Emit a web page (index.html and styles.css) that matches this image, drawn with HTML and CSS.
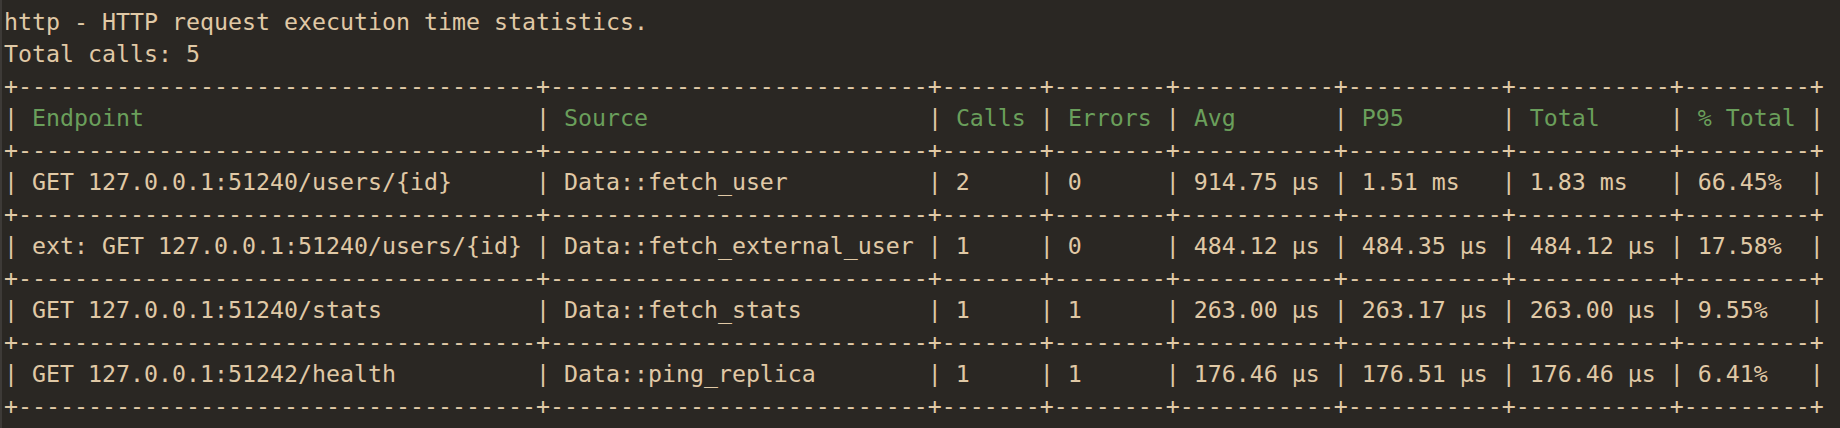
FILE: index.html
```html
<!DOCTYPE html>
<html lang="en">
<head>
  <meta charset="UTF-8">
  <meta name="viewport" content="width=device-width, initial-scale=1.0">
  <title>http - HTTP request execution time statistics</title>
  <link rel="stylesheet" href="styles.css">
</head>
<body>
  <div class="terminal">
<pre class="output">http - HTTP request execution time statistics.
Total calls: 5
+-------------------------------------+---------------------------+-------+--------+-----------+-----------+-----------+---------+
| <span class="hd">Endpoint</span>                            | <span class="hd">Source</span>                    | <span class="hd">Calls</span> | <span class="hd">Errors</span> | <span class="hd">Avg</span>       | <span class="hd">P95</span>       | <span class="hd">Total</span>     | <span class="hd">% Total</span> |
+-------------------------------------+---------------------------+-------+--------+-----------+-----------+-----------+---------+
| GET 127.0.0.1:51240/users/{id}      | Data::fetch_user          | 2     | 0      | 914.75 µs | 1.51 ms   | 1.83 ms   | 66.45%  |
+-------------------------------------+---------------------------+-------+--------+-----------+-----------+-----------+---------+
| ext: GET 127.0.0.1:51240/users/{id} | Data::fetch_external_user | 1     | 0      | 484.12 µs | 484.35 µs | 484.12 µs | 17.58%  |
+-------------------------------------+---------------------------+-------+--------+-----------+-----------+-----------+---------+
| GET 127.0.0.1:51240/stats           | Data::fetch_stats         | 1     | 1      | 263.00 µs | 263.17 µs | 263.00 µs | 9.55%   |
+-------------------------------------+---------------------------+-------+--------+-----------+-----------+-----------+---------+
| GET 127.0.0.1:51242/health          | Data::ping_replica        | 1     | 1      | 176.46 µs | 176.51 µs | 176.46 µs | 6.41%   |
+-------------------------------------+---------------------------+-------+--------+-----------+-----------+-----------+---------+</pre>
  </div>
</body>
</html>
```

FILE: styles.css
```css
html, body {
  margin: 0;
  height: 100%;
  background: #2a2723;
}
.terminal {
  box-sizing: border-box;
  height: 100%;
  border-left: 2px solid #3d3a37;
  padding: 6px 0 0 2px;
  background: #2a2723;
  overflow: hidden;
}
.output {
  margin: 0;
  font-family: "DejaVu Sans Mono", "Liberation Mono", monospace;
  font-size: 23.25px;
  line-height: 32px;
  color: #e0c9a6;
  white-space: pre;
}
.hd {
  color: #6a9f5b;
}
```
